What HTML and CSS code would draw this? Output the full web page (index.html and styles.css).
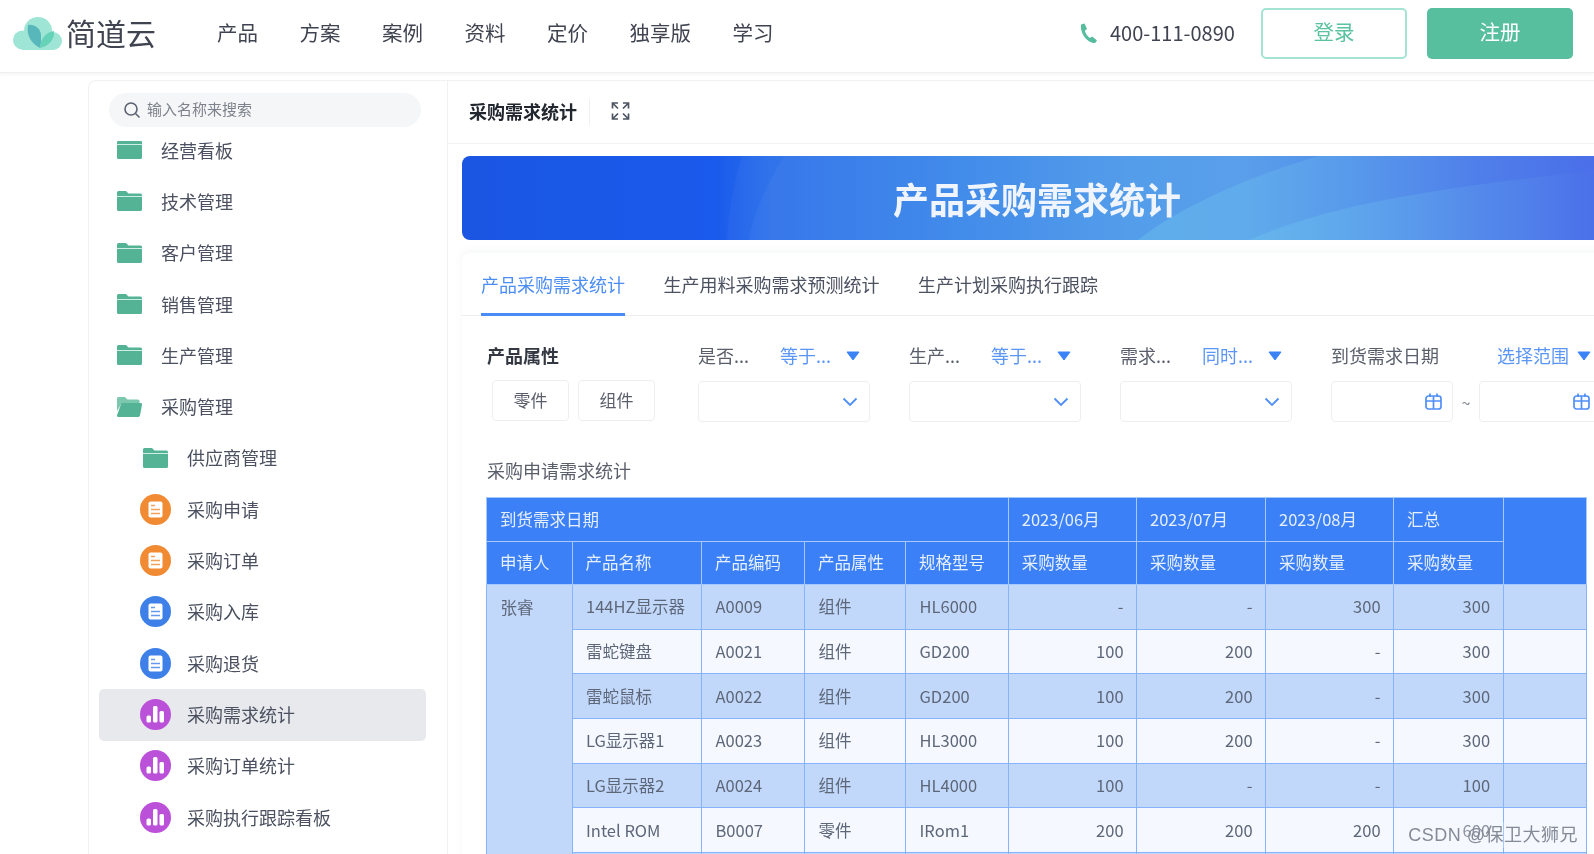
FILE: index.html
```html
<!DOCTYPE html>
<html lang="zh-CN">
<head>
<meta charset="utf-8">
<title>简道云 - 采购需求统计</title>
<link rel="stylesheet" href="styles.css">
</head>
<body>
<svg class="defs" width="0" height="0" aria-hidden="true">
  <symbol id="folder" viewBox="0 0 25 20">
    <path d="M1.500 0H9l2.500 2.500H23.500A1.500 1.500 0 0 1 25 4v14.500A1.500 1.500 0 0 1 23.500 20H1.500A1.500 1.500 0 0 1 0 18.500V1.500A1.500 1.500 0 0 1 1.500 0Z" fill="#53b394"/>
    <path d="M0 5.500H25" stroke="#cdeee2" stroke-width="1"/>
  </symbol>
  <symbol id="folder-top" viewBox="0 0 25 18">
    <path d="M1 0H24A1 1 0 0 1 25 1V16.500A1.500 1.500 0 0 1 23.500 18H1.500A1.500 1.500 0 0 1 0 16.500V1A1 1 0 0 1 1 0Z" fill="#53b394"/>
    <path d="M0 3.500H25" stroke="#cdeee2" stroke-width="1"/>
  </symbol>
  <symbol id="folder-open" viewBox="0 0 25 20">
    <path d="M1.500 0H8l2.500 2.500H21A1.500 1.500 0 0 1 22.500 4V6H5L0 14V1.500A1.500 1.500 0 0 1 1.500 0Z" fill="#7cc8ae"/>
    <path d="M4.500 6H23.500A1.500 1.500 0 0 1 25 7.700L23 18.600A1.700 1.700 0 0 1 21.300 20H1.500A1.500 1.500 0 0 1 0 18.300Z" fill="#53b394"/>
  </symbol>
  <symbol id="doc" viewBox="0 0 31 31">
    <circle cx="15.500" cy="15.500" r="15.500" fill="currentColor"/>
    <rect x="8.500" y="7.500" width="14" height="16" rx="2" fill="#fff"/>
    <path d="M11 11.500H15M11 15.500H20M11 19.500H20" stroke="currentColor" stroke-width="1.500" opacity=".8"/>
  </symbol>
  <symbol id="chart" viewBox="0 0 31 31">
    <circle cx="15.500" cy="15.500" r="15.500" fill="currentColor"/>
    <rect x="6.500" y="16.500" width="4.500" height="7" rx="1.500" fill="#fff"/>
    <rect x="13" y="7" width="4.500" height="16.500" rx="1.500" fill="#fff"/>
    <rect x="19.500" y="12" width="4.500" height="11.500" rx="1.500" fill="#fff"/>
  </symbol>
  <symbol id="caret" viewBox="0 0 14 10">
    <path d="M1 1H13L7 9Z" fill="#3b82f6" stroke="#3b82f6" stroke-linejoin="round"/>
  </symbol>
  <symbol id="chev" viewBox="0 0 16 10">
    <path d="M1.500 1.500L8 8L14.500 1.500" fill="none" stroke="#4f8ff7" stroke-width="1.800"/>
  </symbol>
  <symbol id="cal" viewBox="0 0 17 17">
    <rect x="1" y="3" width="15" height="13" rx="2.500" fill="none" stroke="#4f8ff7" stroke-width="1.700"/>
    <path d="M1 8H16M8.500 3V16M5 .5V4M12 .5V4" fill="none" stroke="#4f8ff7" stroke-width="1.700"/>
  </symbol>
</svg>

<div class="page">
  <header class="topbar">
    <div class="brand">
      <svg class="logo" viewBox="0 0 49 33" aria-hidden="true">
        <circle cx="9.500" cy="23" r="9.500" fill="#9fe5d5"/>
        <circle cx="25" cy="14" r="14" fill="#9fe5d5"/>
        <circle cx="40" cy="24" r="9" fill="#9fe5d5"/>
        <rect x="9" y="22" width="31" height="11" fill="#9fe5d5"/>
        <path d="M27 31C19 27 13 19 15 8C21 7 28 11 28 19C28 24 28 28 27 31Z" fill="#57b7bb"/>
        <path d="M27 31C27 22 33 15 41 14C42 22 36 29 27 31Z" fill="#66d2b8"/>
      </svg>
      <span class="brand-name">简道云</span>
    </div>
    <nav class="nav">
      <a class="nav-link">产品</a>
      <a class="nav-link">方案</a>
      <a class="nav-link">案例</a>
      <a class="nav-link">资料</a>
      <a class="nav-link">定价</a>
      <a class="nav-link">独享版</a>
      <a class="nav-link">学习</a>
    </nav>
    <div class="top-actions">
      <svg class="phone" viewBox="0 0 19 21" aria-hidden="true">
        <path d="M2 1.500L5.500 .5L8 6L5.800 7.800C6.500 10.500 8.500 13.500 10.800 15L13.200 13.500L18 17.500L16 20C9 20.500 1 11 2 1.500Z" fill="#55bd9d"/>
      </svg>
      <span class="tel">400-111-0890</span>
      <button class="btn btn-login"><span class="btn-text">登录</span></button>
      <button class="btn btn-register"><span class="btn-text">注册</span></button>
    </div>
  </header>

  <div class="workspace">
    <aside class="sidebar">
      <div class="search">
        <svg class="search-icon" viewBox="0 0 18 18" aria-hidden="true">
          <circle cx="8" cy="8" r="6" fill="none" stroke="#5b6270" stroke-width="1.600"/>
          <path d="M12.500 12.500L16.500 16.500" stroke="#5b6270" stroke-width="1.600"/>
        </svg>
        <span class="search-text">输入名称来搜索</span>
      </div>
      <ul class="tree">
        <li class="row"><svg class="ico ico-folder-top"><use href="#folder-top"/></svg><span class="row-text">经营看板</span></li>
        <li class="row"><svg class="ico ico-folder"><use href="#folder"/></svg><span class="row-text">技术管理</span></li>
        <li class="row"><svg class="ico ico-folder"><use href="#folder"/></svg><span class="row-text">客户管理</span></li>
        <li class="row"><svg class="ico ico-folder"><use href="#folder"/></svg><span class="row-text">销售管理</span></li>
        <li class="row"><svg class="ico ico-folder"><use href="#folder"/></svg><span class="row-text">生产管理</span></li>
        <li class="row"><svg class="ico ico-folder"><use href="#folder-open"/></svg><span class="row-text">采购管理</span></li>
        <li class="row child"><svg class="ico ico-folder"><use href="#folder"/></svg><span class="row-text">供应商管理</span></li>
        <li class="row child"><svg class="ico orange"><use href="#doc"/></svg><span class="row-text">采购申请</span></li>
        <li class="row child"><svg class="ico orange"><use href="#doc"/></svg><span class="row-text">采购订单</span></li>
        <li class="row child"><svg class="ico blue"><use href="#doc"/></svg><span class="row-text">采购入库</span></li>
        <li class="row child"><svg class="ico blue"><use href="#doc"/></svg><span class="row-text">采购退货</span></li>
        <li class="row child active"><svg class="ico purple"><use href="#chart"/></svg><span class="row-text">采购需求统计</span></li>
        <li class="row child"><svg class="ico purple"><use href="#chart"/></svg><span class="row-text">采购订单统计</span></li>
        <li class="row child"><svg class="ico purple"><use href="#chart"/></svg><span class="row-text">采购执行跟踪看板</span></li>
      </ul>
    </aside>

    <main class="main">
      <div class="titlebar">
        <h2 class="page-title">采购需求统计</h2>
        <svg class="expand" viewBox="0 0 19 18" aria-hidden="true">
          <path d="M7 1H1.500V6.500M12 1H17.500V6.500M7 17H1.500V11.500M12 17H17.500V11.500M2 1.500L7 6.500M17 1.500L12 6.500M2 16.500L7 11.500M17 16.500L12 11.500" fill="none" stroke="#4d5563" stroke-width="1.700"/>
        </svg>
      </div>

      <div class="content">
        <section class="banner">
          <svg class="banner-art" viewBox="0 0 1150 84" preserveAspectRatio="none" aria-hidden="true">
            <defs>
              <linearGradient id="band" x1="0" x2="1" y1="0" y2="0">
                <stop offset="0" stop-color="#fff" stop-opacity=".035"/>
                <stop offset="1" stop-color="#fff" stop-opacity="0"/>
              </linearGradient>
              <linearGradient id="sweep" x1="0" x2="1" y1="0" y2="0">
                <stop offset="0" stop-color="#6fc6ee" stop-opacity=".4"/>
                <stop offset="1" stop-color="#6fc6ee" stop-opacity="0"/>
              </linearGradient>
            </defs>
            <path d="M280 0C272 28 266 56 265 84H700V0Z" fill="url(#band)"/>
            <path d="M322 0C305 28 292 56 287 84H700V0Z" fill="url(#band)"/>
            <path d="M857 0C780 22 712 55 676 84H1120V0Z" fill="url(#sweep)"/>
            <path d="M788 84C880 42 1020 28 1150 12V84Z" fill="url(#sweep)"/>
          </svg>
          <h1 class="banner-title">产品采购需求统计</h1>
        </section>

        <section class="panel">
          <div class="tabs">
            <span class="tab tab-on">产品采购需求统计</span>
            <span class="tab">生产用料采购需求预测统计</span>
            <span class="tab">生产计划采购执行跟踪</span>
          </div>

          <div class="filters">
            <div class="fgroup">
              <div class="fhead"><strong class="fname">产品属性</strong></div>
              <div class="chips"><span class="chip">零件</span><span class="chip">组件</span></div>
            </div>
            <div class="fgroup">
              <div class="fhead"><span class="flabel">是否...</span><span class="fop">等于...</span><svg class="caret"><use href="#caret"/></svg></div>
              <div class="select"><svg class="chev"><use href="#chev"/></svg></div>
            </div>
            <div class="fgroup">
              <div class="fhead"><span class="flabel">生产...</span><span class="fop">等于...</span><svg class="caret"><use href="#caret"/></svg></div>
              <div class="select"><svg class="chev"><use href="#chev"/></svg></div>
            </div>
            <div class="fgroup">
              <div class="fhead"><span class="flabel">需求...</span><span class="fop">同时...</span><svg class="caret"><use href="#caret"/></svg></div>
              <div class="select"><svg class="chev"><use href="#chev"/></svg></div>
            </div>
            <div class="fgroup fgroup-date">
              <div class="fhead"><span class="flabel flabel-wide">到货需求日期</span><span class="fop fop-wide">选择范围</span><svg class="caret"><use href="#caret"/></svg></div>
              <div class="dates">
                <div class="date"><svg class="cal"><use href="#cal"/></svg></div>
                <span class="tilde">~</span>
                <div class="date"><svg class="cal"><use href="#cal"/></svg></div>
              </div>
            </div>
          </div>

          <div class="report-title">采购申请需求统计</div>

          <table class="grid">
            <colgroup>
              <col class="c1"><col class="c2"><col class="c3"><col class="c4"><col class="c5">
              <col class="c6"><col class="c7"><col class="c8"><col class="c9"><col class="c10">
            </colgroup>
            <thead>
              <tr>
                <th colspan="5">到货需求日期</th>
                <th>2023/06月</th><th>2023/07月</th><th>2023/08月</th><th>汇总</th>
                <th rowspan="2"></th>
              </tr>
              <tr>
                <th>申请人</th><th>产品名称</th><th>产品编码</th><th>产品属性</th><th>规格型号</th>
                <th>采购数量</th><th>采购数量</th><th>采购数量</th><th>采购数量</th>
              </tr>
            </thead>
            <tbody>
              <tr class="odd">
                <td rowspan="7" class="owner">张睿</td>
                <td>144HZ显示器</td><td>A0009</td><td>组件</td><td>HL6000</td>
                <td class="num">-</td><td class="num">-</td><td class="num">300</td><td class="num">300</td><td></td>
              </tr>
              <tr class="even">
                <td>雷蛇键盘</td><td>A0021</td><td>组件</td><td>GD200</td>
                <td class="num">100</td><td class="num">200</td><td class="num">-</td><td class="num">300</td><td></td>
              </tr>
              <tr class="odd">
                <td>雷蛇鼠标</td><td>A0022</td><td>组件</td><td>GD200</td>
                <td class="num">100</td><td class="num">200</td><td class="num">-</td><td class="num">300</td><td></td>
              </tr>
              <tr class="even">
                <td>LG显示器1</td><td>A0023</td><td>组件</td><td>HL3000</td>
                <td class="num">100</td><td class="num">200</td><td class="num">-</td><td class="num">300</td><td></td>
              </tr>
              <tr class="odd">
                <td>LG显示器2</td><td>A0024</td><td>组件</td><td>HL4000</td>
                <td class="num">100</td><td class="num">-</td><td class="num">-</td><td class="num">100</td><td></td>
              </tr>
              <tr class="even">
                <td>Intel ROM</td><td>B0007</td><td>零件</td><td>IRom1</td>
                <td class="num">200</td><td class="num">200</td><td class="num">200</td><td class="num">600</td><td></td>
              </tr>
              <tr class="odd">
                <td></td><td></td><td></td><td></td><td></td><td></td><td></td><td></td><td></td>
              </tr>
            </tbody>
          </table>
        </section>
      </div>
    </main>
  </div>

  <div class="watermark">CSDN @保卫大狮兄</div>
</div>
</body>
</html>
```
FILE: styles.css
```css
* { box-sizing: border-box; }
html, body { margin: 0; padding: 0; background: #fff; }
body {
  width: 1594px;
  height: 854px;
  overflow: hidden;
  font-family: "Noto Sans CJK SC", "Noto Sans", sans-serif;
  color: #4b5160;
}
.defs { position: absolute; }
.page {
  position: relative;
  width: 1594px;
  height: 854px;
  overflow: hidden;
  filter: blur(0.45px);
}

/* top bar */
.topbar {
  display: flex;
  align-items: center;
  height: 73px;
  padding: 0 21px 5px 13px;
  border-bottom: 1px solid #eeeff1;
  box-shadow: 0 1px 4px rgba(30, 40, 60, .06);
}
.brand { display: flex; align-items: center; gap: 4px; width: 204px; padding-bottom: 3px; }
.logo { width: 49px; height: 33px; margin-top: 3px; }
.brand-name { font-size: 30px; line-height: 40px; color: #3f4450; }
.nav { display: flex; gap: 41.500px; padding-bottom: 3px; }
.nav-link { font-size: 20.500px; line-height: 30px; color: #3f4450; }
.top-actions { display: flex; align-items: center; margin-left: auto; }
.phone { width: 19px; height: 21px; margin-right: 12px; }
.tel { font-size: 20px; color: #3f4450; width: 151px; padding-bottom: 3px; }
.btn {
  width: 146px;
  height: 51px;
  border-radius: 5px;
  font-family: inherit;
  font-size: 20.500px;
  padding: 0 0 5px;
}
.btn-login { background: #fff; border: 2px solid #a3e3d2; color: #5ac2a0; margin-right: 20px; }
.btn-register { background: #57bf9e; border: 0; color: #fff; }
.btn-text { display: block; }

/* layout */
.workspace { display: flex; height: 781px; padding: 7px 0 0 88px; }

/* sidebar */
.sidebar {
  width: 360px;
  flex: none;
  padding-top: 12px;
  border: 1px solid #f0f1f3;
  border-bottom: 0;
  border-radius: 8px 0 0 0;
}
.search {
  display: flex;
  align-items: center;
  height: 34px;
  margin: 0 26px 0 20px;
  padding-left: 14px;
  border-radius: 17px;
  background: #f5f6f8;
}
.search-icon { width: 18px; height: 18px; margin-right: 6px; flex: none; }
.search-text { font-size: 15px; color: #7d828c; padding-bottom: 3px; }
.tree { list-style: none; margin: -2px 21px 0 10px; padding: 0; }
.row {
  display: flex;
  align-items: center;
  gap: 16px;
  height: 51.300px;
  padding-left: 15px;
  border-radius: 5px;
  font-size: 18px;
  color: #4b5160;
}
.row.child { padding-left: 41px; }
.row.active { background: #e8e9ed; }
.row-text { padding-bottom: 2px; }
.ico { width: 31px; height: 31px; flex: none; margin-bottom: 1px; }
.ico-folder { height: 20px; }
.ico-folder-top { height: 18px; }
.orange { color: #f08a33; }
.blue { color: #3e80e8; }
.purple { color: #bb50d9; }

/* main */
.main { flex: 1; min-width: 0; overflow: hidden; border-top: 1px solid #f0f1f3; }
.titlebar {
  display: flex;
  align-items: center;
  height: 63px;
  padding-left: 21px;
  border-bottom: 1px solid #f1f2f4;
}
.page-title {
  margin: 0;
  padding: 0 12px 2px 0;
  border-right: 1px solid #eff0f2;
  font-size: 18px;
  font-weight: 700;
  line-height: 24px;
  color: #22262e;
}
.expand { width: 19px; height: 18px; margin-left: 21px; margin-bottom: 3px; }
.content { width: 1164px; padding: 12px 0 0 14px; }

.banner {
  position: relative;
  display: flex;
  align-items: center;
  justify-content: center;
  height: 84px;
  border-radius: 8px;
  overflow: hidden;
  background: linear-gradient(90deg, #1a56e2 0, #1a5aec 22%, #2a6fe9 27%, #3a86ea 42%, #539dea 58%, #5a9fea 68%, #5290ea 76%, #4c78e9 88%, #4a6ee9 100%);
}
.banner-art { position: absolute; inset: 0; width: 100%; height: 100%; }
.banner-title {
  position: relative;
  margin: 0;
  font-size: 36px;
  line-height: 50px;
  font-weight: 700;
  color: #f0f5fd;
}

.panel { margin-top: 13px; padding-bottom: 10px; box-shadow: 0 -2px 8px rgba(60, 80, 120, .05); border-radius: 8px 8px 0 0; }
.tabs {
  display: flex;
  gap: 38.500px;
  height: 63px;
  padding-left: 19px;
  border-bottom: 1px solid #eceef1;
}
.tab {
  height: 63px;
  padding-top: 18px;
  border-bottom: 3px solid transparent;
  font-size: 18px;
  line-height: 26px;
  color: #4b5160;
}
.tab-on { color: #4c8df5; border-bottom-color: #4a8cf6; }

.filters { display: flex; gap: 39px; padding: 28px 0 0 25px; }
.fgroup { width: 172px; flex: none; }
.fgroup-date { width: 280px; }
.fhead { display: flex; align-items: center; height: 22px; margin-bottom: 15px; }
.fname { font-size: 18px; font-weight: 700; color: #333843; }
.flabel { width: 82px; font-size: 18px; color: #5a5f6b; flex: none; }
.flabel-wide { width: 166px; }
.fop { width: 66px; font-size: 18px; color: #5b96f6; flex: none; }
.fop-wide { width: 80px; }
.caret { width: 14px; height: 10px; flex: none; margin-top: 2px; }
.chips { display: flex; gap: 9px; padding-left: 5px; margin-top: -1px; }
.chip {
  width: 77px;
  height: 41px;
  border: 1px solid #eceef1;
  border-radius: 4px;
  font-size: 17px;
  line-height: 37px;
  text-align: center;
  color: #5a5f6b;
}
.select, .date {
  display: flex;
  align-items: center;
  justify-content: flex-end;
  height: 41px;
  border: 1px solid #eceef1;
  border-radius: 4px;
}
.select { padding-right: 11px; }
.date { width: 122px; flex: none; padding-right: 10px; }
.chev { width: 16px; height: 10px; }
.cal { width: 17px; height: 17px; }
.dates { display: flex; align-items: center; }
.tilde { width: 26px; text-align: center; font-size: 16px; color: #7d828c; }

.report-title { margin-top: 35px; font-size: 18px; line-height: 26px; padding-left: 25px; color: #5a5f6b; }

/* table */
.grid {
  margin: 14px 0 0 24px;
  width: 1100px;
  table-layout: fixed;
  border-collapse: collapse;
  font-size: 16.500px;
}
.c1 { width: 85.500px; }
.c2 { width: 129.500px; }
.c3 { width: 103px; }
.c4 { width: 101px; }
.c5 { width: 102.700px; }
.c6 { width: 128.300px; }
.c7 { width: 129px; }
.c8 { width: 128px; }
.c9 { width: 109.500px; }
.c10 { width: 83.500px; }
.grid th {
  height: 43.500px;
  padding: 0 13px 1px;
  background: #3c80f8;
  border: 1px solid #a6c8fd;
  color: #e6effe;
  font-weight: 400;
  text-align: left;
  white-space: nowrap;
}
.grid td {
  height: 44.700px;
  padding: 0 12.500px 1px 13.500px;
  border: 1px solid #86b3fb;
  color: #5d6778;
  white-space: nowrap;
}
.odd td, .owner { background: #c2d8fb; }
.even td { background: #f5f8ff; }
.grid td.owner { vertical-align: top; padding-top: 10px; background: #c2d8fb; }
.grid td.num { text-align: right; }

.watermark {
  position: absolute;
  right: 16px;
  bottom: 6px;
  padding: 0 0 0 3px;
  font-size: 18px;
  line-height: 26px;
  letter-spacing: .5px;
  font-family: "Liberation Sans", "Noto Sans CJK SC", sans-serif;
  color: #858b96;
  background: rgba(245, 248, 255, .3);
}
```
